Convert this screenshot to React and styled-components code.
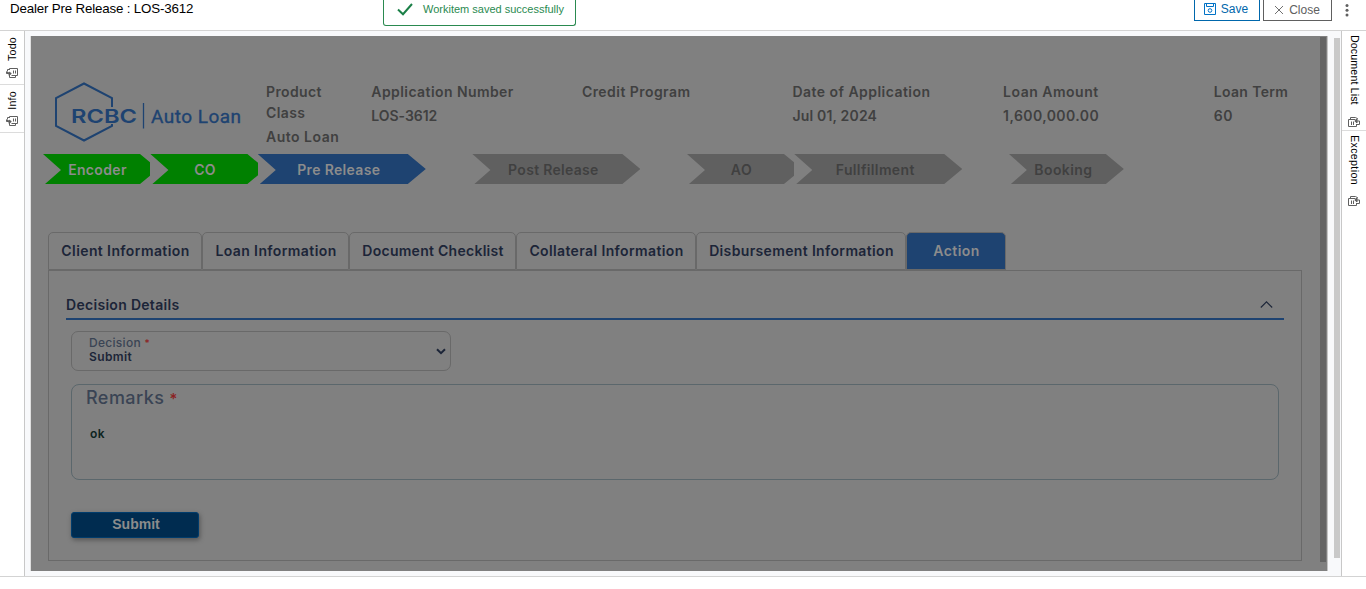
import React from "react";
import styled, { createGlobalStyle } from "styled-components";

const Global = createGlobalStyle`
  *, *::before, *::after { box-sizing: border-box; }
  body { margin: 0; background: #fff; overflow: hidden; font-family: "Liberation Sans", Arial, sans-serif; }
`;

const Page = styled.div`
  width: 1366px;
  height: 589px;
  display: flex;
  flex-direction: column;
  overflow: hidden;
`;

const Header = styled.header`
  height: 31px;
  flex: none;
  display: flex;
  align-items: flex-start;
  border-bottom: 1px solid #d3d3d3;
  padding-left: 10px;
`;

const Title = styled.h1`
  margin: 0;
  width: 373px;
  font-size: 13.33px;
  font-weight: 400;
  line-height: 17px;
  letter-spacing: -0.17px;
  color: #000;
`;

const Toast = styled.div`
  width: 193px;
  height: 26px;
  display: flex;
  border: 1px solid #2a8a50;
  border-top: 0;
  border-radius: 0 0 3px 3px;
  padding-left: 13px;
  color: #2a8a50;
  font-size: 11px;
  line-height: 18px;
  white-space: nowrap;

  svg { margin: 3px 10px 0 0; flex: none; }
`;

const Actions = styled.div`
  margin-left: auto;
  display: flex;
  align-items: flex-start;
  gap: 3px;
`;

const HeaderButton = styled.button`
  width: ${(p) => p.$width}px;
  height: 21px;
  margin: 0;
  padding: 0 ${(p) => p.$right || 0}px ${(p) => p.$bottom}px 0;
  display: flex;
  align-items: center;
  justify-content: center;
  gap: ${(p) => p.$gap}px;
  border: 1px solid ${(p) => p.$border};
  border-top: 0;
  background: #fff;
  color: ${(p) => p.$color};
  font: 12px/18px "Liberation Sans", Arial, sans-serif;
`;

const MoreButton = styled.div`
  width: 31px;
  padding: 3px 0 0 9px;
`;

const Body = styled.div`
  height: 546px;
  flex: none;
  display: flex;
  border-bottom: 1px solid #d3d3d3;
`;

const Rail = styled.nav`
  width: 25px;
  flex: none;
  background: #fff;
  border-${(p) => p.$edge}: 1px solid #c8c8c8;
`;

const RailItem = styled.div`
  height: ${(p) => p.$height}px;
  display: flex;
  flex-direction: column;
  align-items: center;
  justify-content: space-between;
  padding: ${(p) => p.$pad};
  border-bottom: ${(p) => (p.$last ? "0" : "1px solid #dcdcdc")};
`;

const RailLabel = styled.span`
  writing-mode: vertical-rl;
  transform: ${(p) => (p.$flip ? "rotate(180deg)" : "none")};
  font-size: 10.67px;
  line-height: 13px;
  letter-spacing: ${(p) => p.$ls || 0}px;
  color: #000;
  white-space: nowrap;
`;

const Workspace = styled.main`
  flex: 1;
  display: flex;
  background: #f8f9fb;
  padding: 5px 0 5px 5px;
`;

const Panel = styled.section`
  width: 1298px;
  display: flex;
  background: #808080;
  border-left: 1px solid #dfdfdf;
  border-right: 1px solid #c4c4c4;
`;

const PanelContent = styled.div`
  width: 1289px;
  padding: 46px 18px 0 12px;
  font-family: Inter, "Noto Sans", sans-serif;
`;

const PanelScrollbar = styled.div`
  width: 6px;
  height: 525px;
  margin-top: 1px;
  background: #646464;
`;

const OuterScrollbar = styled.div`
  width: 6px;
  height: 520px;
  margin: 2px 0 0 6px;
  background: #c9c9c9;
`;

const Summary = styled.div`
  height: 72px;
  display: flex;
`;

const Logo = styled.div`
  width: 223px;
  flex: none;
  padding-left: 11px;
`;

const Fact = styled.dl`
  width: ${(p) => p.$width}px;
  flex: none;
  margin: -1px 0 0;
  font-size: 14px;
  font-weight: 600;
  line-height: 21px;
  letter-spacing: ${(p) => p.$ls}px;
  color: #404040;

  dt { max-width: ${(p) => (p.$wrap ? "80px" : "none")}; }
  dd { margin: 3px 0 0; letter-spacing: ${(p) => p.$valueLs}px; }
`;

const Stages = styled.div`
  height: 30px;
  display: flex;
`;

const StageCell = styled.div`
  width: ${(p) => p.$width}px;
  flex: none;
  overflow: hidden;
`;

const tones = {
  done: { bg: "#008000", fg: "#8c8c8c" },
  current: { bg: "#1e4371", fg: "#8c8c8c" },
  pending: { bg: "#606060", fg: "#404040" },
};

const StageArrow = styled.div`
  width: ${(p) => (p.$wide ? 168 : 115)}px;
  height: 30px;
  padding: 1px ${(p) => (p.$wide ? 6 : 6)}px 0 0;
  clip-path: polygon(0 0, calc(100% - 18px) 0, 100% 50%, calc(100% - 18px) 100%, 2px 100%, 18px 53%);
  background: ${(p) => tones[p.$tone].bg};
  color: ${(p) => tones[p.$tone].fg};
  font-size: 14px;
  font-weight: 600;
  line-height: 30px;
  letter-spacing: ${(p) => p.$ls || 0}px;
  text-align: center;
`;

const Tabs = styled.div`
  height: 38px;
  margin: 48px 0 0 5px;
  display: flex;
`;

const Tab = styled.div`
  width: ${(p) => p.$width}px;
  flex: none;
  padding-left: 1px;
  border: 1px solid #696969;
  border-radius: 5px 5px 0 0;
  background: ${(p) => (p.$active ? "#1e4371" : "transparent")};
  color: ${(p) => (p.$active ? "#8c8c8c" : "#1c2538")};
  font-size: 14px;
  font-weight: 600;
  line-height: 36px;
  letter-spacing: ${(p) => p.$ls || 0}px;
  text-align: center;
  white-space: nowrap;
`;

const TabPanel = styled.div`
  width: 1254px;
  height: 291px;
  margin-left: 5px;
  padding: 24px 17px 0;
  border: 1px solid #696969;
`;

const SectionHeader = styled.div`
  height: 25px;
  display: flex;
  justify-content: space-between;
  padding-right: 11px;
  border-bottom: 2px solid #1e4371;
  font-size: 14px;
  font-weight: 600;
  line-height: 20px;
  letter-spacing: 0.3px;
  color: #1c2538;

  svg { margin-top: 5px; }
`;

const Fields = styled.div`
  padding: 11px 5px 0;
`;

const SelectField = styled.div`
  width: 380px;
  height: 40px;
  display: flex;
  align-items: center;
  justify-content: space-between;
  padding: 0 4px 0 17px;
  border: 1px solid #696969;
  border-radius: 7px;
`;

const SelectText = styled.div`
  padding-bottom: 3px;
`;

const FieldLabel = styled.div`
  font-size: ${(p) => p.$size}px;
  line-height: 13px;
  font-weight: 500;
  letter-spacing: ${(p) => p.$ls}px;
  color: #3a4454;
  span { color: #8c2222; font-size: ${(p) => p.$mark}px; }
`;

const FieldValue = styled.div`
  margin-top: ${(p) => p.$top || 0}px;
  padding-left: ${(p) => p.$indent || 0}px;
  font-size: 12px;
  line-height: 13px;
  font-weight: 600;
  letter-spacing: 0.4px;
  color: ${(p) => p.$color || "#1c2538"};
`;

const TextAreaField = styled.div`
  width: 1208px;
  height: 96px;
  margin-top: 13px;
  padding: 6px 14px;
  border: 1px solid #5b676c;
  border-radius: 8px;
`;

const SubmitButton = styled.button`
  display: block;
  width: 128px;
  height: 26px;
  margin: 32px 0 0;
  padding: 0 0 2px 2px;
  border: 1px solid #003c6c;
  border-radius: 3px;
  background: #002c50;
  box-shadow: 1px 2px 5px rgba(0, 0, 0, 0.35);
  color: #8c8c8c;
  font: bold 14px/20px "Liberation Sans", Arial, sans-serif;
`;

const IconSvg = styled.svg`
  flex: none;
`;

const PagesIcon = () => (
  <IconSvg width="12" height="12" viewBox="0 0 12 12" fill="none" stroke="#606060">
    <path d="M3.500 3V1.500H11.500V8.500H5.500" />
    <path d="M3.500 2.500H1.500V4.500M3.500 7.500V10.500H9.500V9" />
    <path d="M7.500 3.500v3M9.500 3.500v3" />
    <path d="M.5 4.500V6.500H5M3 5 5.300 6.500 3 8.500Z" fill="#606060" />
  </IconSvg>
);

const FolderPagesIcon = () => (
  <IconSvg width="12" height="12" viewBox="0 0 12 12" fill="none" stroke="#606060">
    <path d="M7.500 3.500H.5V10.500H8.500V8" />
    <path d="M2.500 3V1.500H7.500L10 3" />
    <path d="M3.500 5.500V9M5.500 5.500V9" />
    <path d="M9 8.500H11.500V5" />
    <path d="M11.500 5H8M9 3 6.800 5 9 7Z" fill="#606060" />
  </IconSvg>
);

const RcbcLogo = () => (
  <svg width="190" height="60" viewBox="0 0 190 60">
    <g fill="none" stroke="#1e4371" strokeWidth="2">
      <path d="M58 25V16L30 1.500 2 16V44L30 58.500 58 44V42" />
      <path d="M89.500 21V46.500" strokeWidth="1.300" />
    </g>
    <g fill="#1e4371">
      <text x="17" y="40.500" fontFamily="Inter, sans-serif" fontWeight="600" fontSize="19" textLength="66" lengthAdjust="spacingAndGlyphs">RCBC</text>
      <text x="97" y="40.500" fontFamily="Roboto, sans-serif" fontWeight="400" fontSize="19" textLength="90" stroke="#1e4371" strokeWidth=".35">Auto Loan</text>
    </g>
  </svg>
);

const facts = [
  { label: "Product Class", value: "Auto Loan", width: 105.3, wrap: true, ls: 0.38, vls: 0.5 },
  { label: "Application Number", value: "LOS-3612", width: 210.6, ls: 0.42, vls: -0.05 },
  { label: "Credit Program", value: "", width: 210.6, ls: 0.45 },
  { label: "Date of Application", value: "Jul 01, 2024", width: 210.6, ls: 0.46, vls: 0.17 },
  { label: "Loan Amount", value: "1,600,000.00", width: 210.6, ls: 0.5, vls: 0.42 },
  { label: "Loan Term", value: "60", width: 85, ls: 0.35, vls: 0.5 },
];

const stages = [
  { label: "Encoder", tone: "done", width: 107.4, ls: 0.35 },
  { label: "CO", tone: "done", width: 107.4 },
  { label: "Pre Release", tone: "current", width: 214.6, wide: true, ls: 0.33 },
  { label: "Post Release", tone: "pending", width: 214.6, wide: true, ls: 0.3 },
  { label: "AO", tone: "pending", width: 107.3, ls: 0.6 },
  { label: "Fullfillment", tone: "pending", width: 214.6, wide: true, ls: 0.37 },
  { label: "Booking", tone: "pending", width: 116, ls: 0.4 },
];

const tabs = [
  { label: "Client Information", width: 154, ls: 0.4 },
  { label: "Loan Information", width: 147, ls: 0.4 },
  { label: "Document Checklist", width: 167, ls: 0.27 },
  { label: "Collateral Information", width: 180, ls: 0.37 },
  { label: "Disbursement Information", width: 210, ls: 0.35 },
  { label: "Action", width: 100, active: true, ls: 0.45 },
];

export default function App() {
  return (
    <Page>
      <Global />
      <Header>
        <Title>Dealer Pre Release : LOS-3612</Title>
        <Toast>
          <svg width="16" height="13" viewBox="0 0 16 13" fill="none" stroke="#1b8048" strokeWidth="2">
            <path d="M1 6.500 6 11.200 15 1" />
          </svg>
          Workitem saved successfully
        </Toast>
        <Actions>
          <HeaderButton $width={66} $gap={5} $right={2} $bottom={3} $border="#0067ac" $color="#0067ac">
            <svg width="12" height="12" viewBox="0 0 12 12" fill="none" stroke="#0072c6">
              <path d="M.5.5h11v11H.5zM2.500.5v3h7v-3" />
              <circle cx="6" cy="7.500" r="1.800" />
            </svg>
            Save
          </HeaderButton>
          <HeaderButton $width={69} $gap={6} $bottom={1} $border="#606060" $color="#606060">
            <svg width="8" height="8" viewBox="0 0 8 8" stroke="#606060" strokeWidth=".9">
              <path d="M0 0 8 8M8 0 0 8" />
            </svg>
            Close
          </HeaderButton>
          <MoreButton>
            <svg width="6" height="13" viewBox="0 0 6 13" fill="#606060">
              <circle cx="3" cy="1.500" r="1.500" />
              <circle cx="3" cy="6.200" r="1.500" />
              <circle cx="3" cy="11" r="1.500" />
            </svg>
          </MoreButton>
        </Actions>
      </Header>
      <Body>
        <Rail $edge="right">
          <RailItem $height={54} $pad="6px 0 5px">
            <RailLabel $flip $ls={0.25}>Todo</RailLabel>
            <PagesIcon />
          </RailItem>
          <RailItem $height={48} $pad="6px 0 5px">
            <RailLabel $flip $ls={0.25}>Info</RailLabel>
            <PagesIcon />
          </RailItem>
        </Rail>
        <Workspace>
          <Panel>
            <PanelContent>
              <Summary>
                <Logo><RcbcLogo /></Logo>
                {facts.map((f) => (
                  <Fact key={f.label} $width={f.width} $wrap={f.wrap} $ls={f.ls} $valueLs={f.vls ?? 0}>
                    <dt>{f.label}</dt>
                    <dd>{f.value}</dd>
                  </Fact>
                ))}
              </Summary>
              <Stages>
                {stages.map((s) => (
                  <StageCell key={s.label} $width={s.width}>
                    <StageArrow $tone={s.tone} $wide={s.wide} $ls={s.ls}>{s.label}</StageArrow>
                  </StageCell>
                ))}
              </Stages>
              <Tabs>
                {tabs.map((t) => (
                  <Tab key={t.label} $width={t.width} $active={t.active} $ls={t.ls}>{t.label}</Tab>
                ))}
              </Tabs>
              <TabPanel>
                <SectionHeader>
                  Decision Details
                  <svg width="13" height="9" viewBox="0 0 13 9" fill="none" stroke="#1c2538" strokeWidth="1.100">
                    <path d="M.8 7.500 6.500 1.800 12.200 7.500" />
                  </svg>
                </SectionHeader>
                <Fields>
                  <SelectField>
                    <SelectText>
                      <FieldLabel $size={12} $mark={10} $ls={0.3}>Decision <span>*</span></FieldLabel>
                      <FieldValue>Submit</FieldValue>
                    </SelectText>
                    <svg width="10" height="7" viewBox="0 0 10 7" fill="none" stroke="#1c2538" strokeWidth="2">
                      <path d="M1 1.200 5 5.200 9 1.200" />
                    </svg>
                  </SelectField>
                  <TextAreaField>
                    <FieldLabel $size={18} $mark={15} $ls={0.45}>Remarks <span>*</span></FieldLabel>
                    <FieldValue $top={22} $indent={4} $color="#0d2421">ok</FieldValue>
                  </TextAreaField>
                  <SubmitButton>Submit</SubmitButton>
                </Fields>
              </TabPanel>
            </PanelContent>
            <PanelScrollbar />
          </Panel>
          <OuterScrollbar />
        </Workspace>
        <Rail $edge="left">
          <RailItem $height={100} $pad="4px 0 2px">
            <RailLabel $ls={0.12}>Document List</RailLabel>
            <FolderPagesIcon />
          </RailItem>
          <RailItem $height={79} $pad="4px 0 3px" $last>
            <RailLabel $ls={0.35}>Exception</RailLabel>
            <FolderPagesIcon />
          </RailItem>
        </Rail>
      </Body>
    </Page>
  );
}
